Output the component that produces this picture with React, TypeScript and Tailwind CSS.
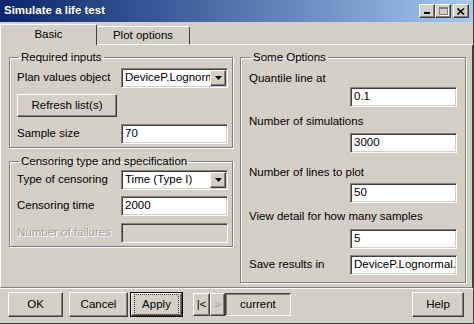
import React from 'react';

const FONT = { fontFamily: '"Liberation Sans", Arial, sans-serif' };

const sunken =
  'border border-t-[#808080] border-l-[#808080] border-b-white border-r-white shadow-[inset_1px_1px_0_#404040,inset_-1px_-1px_0_#d4d0c8]';
const raised =
  'border border-t-white border-l-white border-b-[#404040] border-r-[#404040] shadow-[inset_-1px_-1px_0_#808080]';

function TextField({ value, w = 'w-[107px]', disabled = false }: { value?: string; w?: string; disabled?: boolean }) {
  return (
    <div
      className={`${w} h-[20px] ${sunken} ${disabled ? 'bg-[#d4d0c8]' : 'bg-white'} flex items-center pl-[3px] text-black overflow-hidden whitespace-nowrap`}
    >
      {value}
    </div>
  );
}

function Select({ value }: { value: string }) {
  return (
    <div className={`w-[107px] h-[20px] ${sunken} bg-white flex items-center pl-[3px] overflow-hidden`}>
      <span className="flex-1 whitespace-nowrap overflow-hidden">{value}</span>
      <div className={`w-[16px] h-[16px] mr-[1px] bg-[#d4d0c8] ${raised} flex items-center justify-center`}>
        <svg width="7" height="4" viewBox="0 0 7 4">
          <path d="M0 0h7L3.5 4z" fill="#000" />
        </svg>
      </div>
    </div>
  );
}

function Button({ label, w, h = 'h-[25px]', focus = false }: { label: string; w: string; h?: string; focus?: boolean }) {
  if (focus) {
    return (
      <div className={`${w} ${h} border border-black`}>
        <div className={`h-full ${raised} flex items-center justify-center`}>
          <span className="px-[6px] outline outline-1 outline-dotted outline-[#404040] outline-offset-[1px]">{label}</span>
        </div>
      </div>
    );
  }
  return <div className={`${w} ${h} ${raised} flex items-center justify-center`}>{label}</div>;
}

function Group({ title, className, children }: { title: string; className: string; children: React.ReactNode }) {
  return (
    <fieldset className={`border border-[#808080] shadow-[1px_1px_0_#fff,inset_1px_1px_0_#fff] ${className}`}>
      <legend className="ml-[2px] px-[2px] leading-[14px]">{title}</legend>
      {children}
    </fieldset>
  );
}

export default function App() {
  return (
    <div
      style={FONT}
      className="w-[474px] h-[324px] bg-[#d4d0c8] text-[11.5px] text-black flex flex-col overflow-hidden border-r border-b border-[#404040]"
    >
      {/* title bar */}
      <div className="h-[22px] flex items-center pl-[4px] pr-[4px] bg-gradient-to-r from-[#0a246a] to-[#a6caf0]">
        <span className="text-white font-bold text-[11.5px] flex-1">Simulate a life test</span>
        <div className="flex items-center">
          <div className={`w-[16px] h-[14px] bg-[#d4d0c8] ${raised} flex items-end justify-center pb-[3px]`}>
            <div className="w-[6px] h-[2px] bg-black" />
          </div>
          <div className={`w-[16px] h-[14px] bg-[#d4d0c8] ${raised} flex items-center justify-center`}>
            <div className="w-[9px] h-[8px] border border-t-2 border-[#808080] shadow-[1px_1px_0_#fff]" />
          </div>
          <div className={`ml-[2px] w-[16px] h-[14px] bg-[#d4d0c8] ${raised} flex items-center justify-center`}>
            <svg width="8" height="7" viewBox="0 0 8 7">
              <path d="M0.5 0.5L7 6.5M7 0.5L0.5 6.5" stroke="#000" strokeWidth="1.6" />
            </svg>
          </div>
        </div>
      </div>

      {/* tabs */}
      <div className="h-[23px] flex items-end">
        <div className="w-[97px] h-[21px] border-t border-l border-white border-r border-r-[#404040] rounded-t-[2px] flex items-center justify-center">
          Basic
        </div>
        <div className="w-[93px] h-[19px] border-t border-white border-r border-r-[#404040] border-b border-b-white rounded-t-[2px] flex items-center justify-center">
          Plot options
        </div>
        <div className="flex-1 border-b border-white" />
      </div>

      {/* panel */}
      <div className="h-[243px] border-l border-white border-r border-r-[#404040] border-b border-b-[#808080] shadow-[0_1px_0_#fff] flex pl-[8px] pt-[5px] gap-[9px]">
        <div className="w-[222px] flex flex-col gap-[6px]">
          <Group title="Required inputs" className="h-[98px] pl-[7px] pr-[4px]">
            <div className="flex items-center mt-[4px]">
              <span className="w-[104px]">Plan values object</span>
              <Select value="DeviceP.Lognormal" />
            </div>
            <div className="mt-[6px]">
              <Button label="Refresh list(s)" w="w-[100px]" h="h-[23px]" />
            </div>
            <div className="flex items-center mt-[7px]">
              <span className="w-[104px]">Sample size</span>
              <TextField value="70" />
            </div>
          </Group>
          <Group title="Censoring type and specification" className="h-[93px] pl-[7px] pr-[4px]">
            <div className="flex items-center mt-[2px]">
              <span className="w-[104px]">Type of censoring</span>
              <Select value="Time (Type I)" />
            </div>
            <div className="flex items-center mt-[6px]">
              <span className="w-[104px]">Censoring time</span>
              <TextField value="2000" />
            </div>
            <div className="flex items-center mt-[7px]">
              <span className="w-[104px] text-[#a0a0a0] [text-shadow:1px_1px_0_#fff]">Number of failures</span>
              <TextField disabled />
            </div>
          </Group>
        </div>

        <Group title="Some Options" className="w-[226px] h-[233px] pl-[8px] pr-[8px]">
          <div className="flex flex-col">
            <span className="mt-[7px] leading-[14px]">Quantile line at</span>
            <div className="self-end mt-[2px]">
              <TextField value="0.1" />
            </div>
            <span className="mt-[7px] leading-[14px]">Number of simulations</span>
            <div className="self-end mt-[5px]">
              <TextField value="3000" />
            </div>
            <span className="mt-[12px] leading-[14px]">Number of lines to plot</span>
            <div className="self-end mt-[4px]">
              <TextField value="50" />
            </div>
            <span className="mt-[6px] leading-[14px]">View detail for how many samples</span>
            <div className="self-end mt-[6px]">
              <TextField value="5" />
            </div>
            <div className="flex items-center justify-between mt-[6px]">
              <span>Save results in</span>
              <TextField value="DeviceP.Lognormal.Sim" />
            </div>
          </div>
        </Group>
      </div>

      {/* bottom buttons */}
      <div className="flex items-start pt-[4px] pl-[8px] pr-[9px]">
        <Button label="OK" w="w-[55px]" />
        <div className="ml-[6px]">
          <Button label="Cancel" w="w-[59px]" />
        </div>
        <div className="ml-[2px]">
          <Button label="Apply" w="w-[53px]" focus />
        </div>
        <div className={`ml-[10px] w-[17px] h-[23px] mt-[1px] ${raised} flex items-center justify-center`}>|&lt;</div>
        <div className={`w-[15px] h-[23px] mt-[1px] ${raised} flex items-center justify-center text-[#a0a0a0]`}>&gt;</div>
        <div className="w-[66px] h-[23px] mt-[1px] border border-t-[#404040] border-l-[#404040] border-b-white border-r-white shadow-[inset_1px_1px_0_#808080] flex items-center pl-[14px]">
          current
        </div>
        <div className="flex-1" />
        <Button label="Help" w="w-[52px]" />
      </div>
    </div>
  );
}
